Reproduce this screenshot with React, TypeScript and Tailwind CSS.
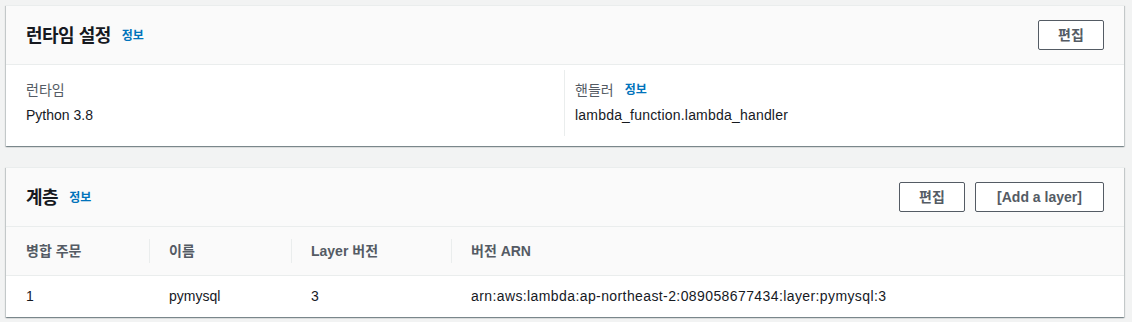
import React from 'react';

const font = "font-['Liberation_Sans','Noto_Sans_CJK_KR',sans-serif]";

const layers = [
  {
    order: '1',
    name: 'pymysql',
    version: '3',
    arn: 'arn:aws:lambda:ap-northeast-2:089058677434:layer:pymysql:3',
  },
];

function InfoLink() {
  return (
    <a className="ml-[11px] text-[12px] font-bold text-[#0073bb] leading-none">정보</a>
  );
}

function Button({ children, className = '' }: { children: React.ReactNode; className?: string }) {
  return (
    <button
      className={`h-[30px] flex items-center justify-center rounded-[2px] border border-[#545b64] bg-white text-[14px] font-bold text-[#545b64] ${className}`}
    >
      {children}
    </button>
  );
}

function Card({ children }: { children: React.ReactNode }) {
  return (
    <div className="bg-white border-t border-[#eaeded] shadow-[0_1px_1px_0_rgba(0,28,36,0.3),1px_1px_1px_0_rgba(0,28,36,0.15),-1px_1px_1px_0_rgba(0,28,36,0.15)]">
      {children}
    </div>
  );
}

function CardHeader({ title, actions }: { title: string; actions: React.ReactNode }) {
  return (
    <div className="flex items-center justify-between bg-[#fafafa] border-b border-[#eaeded] px-5 py-[14px]">
      <div className="flex items-center pt-[2px]">
        <h2 className="text-[18px] font-bold text-[#16191f] leading-[22px] tracking-[-0.5px]">{title}</h2>
        <InfoLink />
      </div>
      <div className="flex gap-[10px]">{actions}</div>
    </div>
  );
}

export default function App() {
  return (
    <div className={`min-h-screen bg-[#f2f3f3] pt-[5px] pl-[6px] pr-[8px] ${font}`}>
      <Card>
        <CardHeader title="런타임 설정" actions={<Button className="w-[66px]">편집</Button>} />
        <div className="grid grid-cols-2 px-5 pt-[5px] pb-[10px] text-[14px] leading-[22px]">
          <div className="pt-[9px] pb-[10px]">
            <div className="text-[#545b64]">런타임</div>
            <div className="mt-[3px] text-[#16191f]">Python 3.8</div>
          </div>
          <div className="pt-[9px] pb-[10px] border-l border-[#eaeded] pl-[10px] -ml-[1px]">
            <div className="flex items-center text-[#545b64]">
              핸들러
              <InfoLink />
            </div>
            <div className="mt-[3px] text-[#16191f] tracking-[0.2px]">lambda_function.lambda_handler</div>
          </div>
        </div>
      </Card>

      <div className="mt-[21px]">
        <Card>
          <CardHeader
            title="계층"
            actions={
              <>
                <Button className="w-[66px]">편집</Button>
                <Button className="w-[129px]">[Add a layer]</Button>
              </>
            }
          />
          <div className="grid grid-cols-[143px_142px_160px_1fr] bg-[#fafafa] border-b border-[#eaeded] text-[14px] font-bold text-[#545b64]">
            {['병합 주문', '이름', 'Layer 버전', '버전 ARN'].map((h, i) => (
              <div key={h} className="py-3">
                <div
                  className={`h-6 flex items-center ${i === 0 ? 'pl-5' : 'border-l border-[#eaeded] pl-[19px]'}`}
                >
                  {h}
                </div>
              </div>
            ))}
          </div>
          {layers.map((l) => (
            <div
              key={l.arn}
              className="grid grid-cols-[143px_142px_160px_1fr] h-[41px] items-center text-[14px] text-[#16191f]"
            >
              <div className="pl-5">{l.order}</div>
              <div className="pl-5">{l.name}</div>
              <div className="pl-5">{l.version}</div>
              <div className="pl-5 tracking-[0.4px]">{l.arn}</div>
            </div>
          ))}
        </Card>
      </div>
    </div>
  );
}
